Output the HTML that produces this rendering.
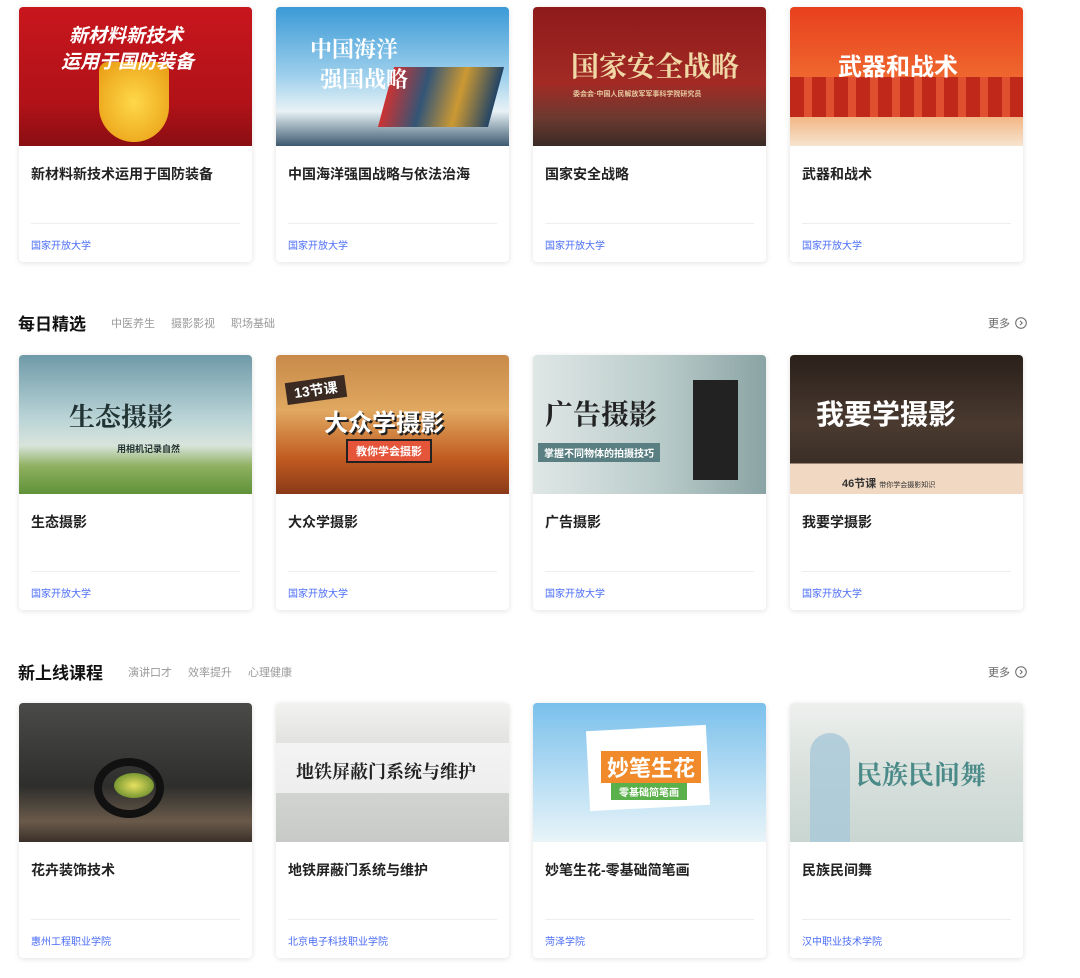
<!DOCTYPE html>
<html><head><meta charset="utf-8"><style>
*{margin:0;padding:0;box-sizing:border-box}
body{width:1080px;height:978px;background:#fff;font-family:"Liberation Sans","Noto Sans CJK SC",sans-serif;position:relative;overflow:hidden}
.card{position:absolute;width:233px;height:255px;background:#fff;border-radius:4px;box-shadow:0 1px 6px rgba(0,0,0,.12);overflow:hidden}
.img{position:absolute;left:0;top:0;width:233px;height:139px;overflow:hidden}
.t{position:absolute;left:12px;top:157px;font-size:14px;font-weight:600;color:#222}
.d{position:absolute;left:12px;right:12px;top:216px;border-top:1px solid #eee}
.s{position:absolute;left:12px;top:230px;font-size:10px;color:#4a6cf7}
.it{position:absolute;font-weight:bold;white-space:nowrap}
.h{position:absolute;left:18px;font-size:17px;font-weight:bold;color:#111}
.tab{position:absolute;font-size:11px;color:#999}
.more{position:absolute;left:988px;font-size:11px;color:#666}
.more svg{margin-left:5px;vertical-align:-2px}
</style></head><body>

<!-- row 1 -->
<div class="card" style="left:19px;top:7px"><div class="img" style="background:linear-gradient(180deg,#c8161d,#b01218 70%,#8a0e12)">
<div style="position:absolute;left:80px;top:55px;width:70px;height:80px;background:radial-gradient(#ffd84a,#e89a10);border-radius:10px 10px 40px 40px"></div>
<div class="it" style="left:50px;top:14px;font-size:19px;color:#fff;font-style:italic">新材料新技术</div>
<div class="it" style="left:42px;top:40px;font-size:19px;color:#fff;font-style:italic">运用于国防装备</div></div>
<div class="t">新材料新技术运用于国防装备</div><div class="d"></div><div class="s">国家开放大学</div></div>

<div class="card" style="left:276px;top:7px"><div class="img" style="background:linear-gradient(180deg,#3a9ad6,#9fd0ec 50%,#e8f2f6 75%,#3d5a70)">
<div style="position:absolute;left:110px;top:60px;width:110px;height:60px;background:linear-gradient(90deg,#c33,#357,#c93,#246);transform:skewX(-15deg)"></div>
<div class="it" style="left:34px;top:26px;font-size:22px;color:#fff;font-family:'Noto Serif CJK SC',serif">中国海洋</div>
<div class="it" style="left:44px;top:56px;font-size:22px;color:#fff;font-family:'Noto Serif CJK SC',serif">强国战略</div></div>
<div class="t">中国海洋强国战略与依法治海</div><div class="d"></div><div class="s">国家开放大学</div></div>

<div class="card" style="left:533px;top:7px"><div class="img" style="background:linear-gradient(180deg,#8e1a1a,#a32a25 55%,#6b3a30 80%,#3a2a25)">
<div class="it" style="left:38px;top:38px;font-size:28px;color:#f0d9a6;font-family:'Noto Serif CJK SC',serif">国家安全战略</div>
<div class="it" style="left:40px;top:82px;font-size:7px;color:#e6c9a0">委会会·中国人民解放军军事科学院研究员</div></div>
<div class="t">国家安全战略</div><div class="d"></div><div class="s">国家开放大学</div></div>

<div class="card" style="left:790px;top:7px"><div class="img" style="background:linear-gradient(180deg,#e8401e,#f06a30 55%,#f3b888 80%,#f6e4cf)">
<div style="position:absolute;left:0;top:70px;width:233px;height:40px;background:repeating-linear-gradient(90deg,#c0281a 0 14px,#e05030 14px 22px)"></div>
<div class="it" style="left:48px;top:40px;font-size:24px;color:#fff">武器和战术</div></div>
<div class="t">武器和战术</div><div class="d"></div><div class="s">国家开放大学</div></div>

<!-- section 2 -->
<div class="h" style="top:310px">每日精选</div>
<div class="tab" style="left:111px;top:315px">中医养生</div>
<div class="tab" style="left:171px;top:315px">摄影影视</div>
<div class="tab" style="left:231px;top:315px">职场基础</div>
<div class="more" style="top:315px">更多<svg width="12" height="12" viewBox="0 0 12 12"><circle cx="6" cy="6" r="5.3" fill="none" stroke="#666" stroke-width="1"/><path d="M5 3.8 L7.2 6 L5 8.2" fill="none" stroke="#666" stroke-width="1"/></svg></div>

<div class="card" style="left:19px;top:355px"><div class="img" style="background:linear-gradient(180deg,#6f9aa8,#b9d3d6 45%,#d8e4dc 65%,#8fb060 80%,#5f9238)">
<div class="it" style="left:50px;top:42px;font-size:26px;color:#233;font-family:'Noto Serif CJK SC',serif">生态摄影</div>
<div class="it" style="left:98px;top:87px;font-size:9px;color:#233">用相机记录自然</div></div>
<div class="t">生态摄影</div><div class="d"></div><div class="s">国家开放大学</div></div>

<div class="card" style="left:276px;top:355px"><div class="img" style="background:linear-gradient(180deg,#c88a4a,#e0a860 40%,#c05a20 75%,#8a3a18)">
<div class="it" style="left:10px;top:24px;font-size:14px;color:#fff;background:#3a2a22;padding:1px 8px;transform:rotate(-8deg)">13节课</div>
<div class="it" style="left:48px;top:48px;font-size:24px;color:#fff;text-shadow:2px 2px 0 #222">大众学摄影</div>
<div class="it" style="left:70px;top:84px;font-size:11px;color:#fff;background:#e5553a;padding:2px 8px;border:2px solid #222">教你学会摄影</div></div>
<div class="t">大众学摄影</div><div class="d"></div><div class="s">国家开放大学</div></div>

<div class="card" style="left:533px;top:355px"><div class="img" style="background:linear-gradient(90deg,#dfe7e6,#b9cbc9 55%,#8aa3a4)">
<div style="position:absolute;left:160px;top:25px;width:45px;height:100px;background:#222"></div>
<div class="it" style="left:12px;top:38px;font-size:28px;color:#222;font-family:'Noto Serif CJK SC',serif">广告摄影</div>
<div class="it" style="left:5px;top:88px;font-size:10px;color:#fff;background:#5a7f82;padding:2px 6px">掌握不同物体的拍摄技巧</div></div>
<div class="t">广告摄影</div><div class="d"></div><div class="s">国家开放大学</div></div>

<div class="card" style="left:790px;top:355px"><div class="img" style="background:linear-gradient(180deg,#2a201a,#4a3a30 50%,#3a2e26 78%,#f1d8c2 78%)">
<div class="it" style="left:26px;top:38px;font-size:28px;color:#fff">我要学摄影</div>
<div class="it" style="left:52px;top:120px;font-size:11px;color:#333">46节课 <span style="font-size:7px;font-weight:normal">带你学会摄影知识</span></div></div>
<div class="t">我要学摄影</div><div class="d"></div><div class="s">国家开放大学</div></div>

<!-- section 3 -->
<div class="h" style="top:659px">新上线课程</div>
<div class="tab" style="left:128px;top:664px">演讲口才</div>
<div class="tab" style="left:188px;top:664px">效率提升</div>
<div class="tab" style="left:248px;top:664px">心理健康</div>
<div class="more" style="top:664px">更多<svg width="12" height="12" viewBox="0 0 12 12"><circle cx="6" cy="6" r="5.3" fill="none" stroke="#666" stroke-width="1"/><path d="M5 3.8 L7.2 6 L5 8.2" fill="none" stroke="#666" stroke-width="1"/></svg></div>

<div class="card" style="left:19px;top:703px"><div class="img" style="background:linear-gradient(180deg,#4a4a48,#2e2e2c 60%,#6a5a4a 85%,#3a302a)">
<div style="position:absolute;left:75px;top:55px;width:70px;height:60px;border:8px solid #111;border-radius:50%"></div>
<div style="position:absolute;left:95px;top:70px;width:40px;height:25px;background:radial-gradient(#e8e060,#4a7a20);border-radius:50%"></div></div>
<div class="t">花卉装饰技术</div><div class="d"></div><div class="s">惠州工程职业学院</div></div>

<div class="card" style="left:276px;top:703px"><div class="img" style="background:linear-gradient(180deg,#f2f2f0,#d6d8d6 50%,#c8cac8)">
<div style="position:absolute;left:0;top:40px;width:233px;height:50px;background:rgba(255,255,255,.6)"></div>
<div class="it" style="left:20px;top:55px;font-size:18px;color:#222;font-family:'Noto Serif CJK SC',serif">地铁屏蔽门系统与维护</div></div>
<div class="t">地铁屏蔽门系统与维护</div><div class="d"></div><div class="s">北京电子科技职业学院</div></div>

<div class="card" style="left:533px;top:703px"><div class="img" style="background:linear-gradient(180deg,#7ac0ec,#bde0f4 60%,#e8f4f8)">
<div style="position:absolute;left:55px;top:25px;width:120px;height:80px;background:#fff;transform:rotate(-3deg)"></div>
<div class="it" style="left:68px;top:48px;font-size:22px;color:#fff;background:#f08a2a;padding:0 6px">妙笔生花</div>
<div class="it" style="left:78px;top:80px;font-size:10px;color:#fff;background:#5ab04a;padding:1px 8px">零基础简笔画</div></div>
<div class="t">妙笔生花-零基础简笔画</div><div class="d"></div><div class="s">菏泽学院</div></div>

<div class="card" style="left:790px;top:703px"><div class="img" style="background:linear-gradient(180deg,#eef0ee,#d8e0dc 50%,#c9d6d2)">
<div style="position:absolute;left:20px;top:30px;width:40px;height:109px;background:#a8c8d8;border-radius:20px 20px 0 0;opacity:.8"></div>
<div class="it" style="left:66px;top:52px;font-size:26px;color:#4a8a88;font-family:'Noto Serif CJK SC',serif">民族民间舞</div></div>
<div class="t">民族民间舞</div><div class="d"></div><div class="s">汉中职业技术学院</div></div>

</body></html>
